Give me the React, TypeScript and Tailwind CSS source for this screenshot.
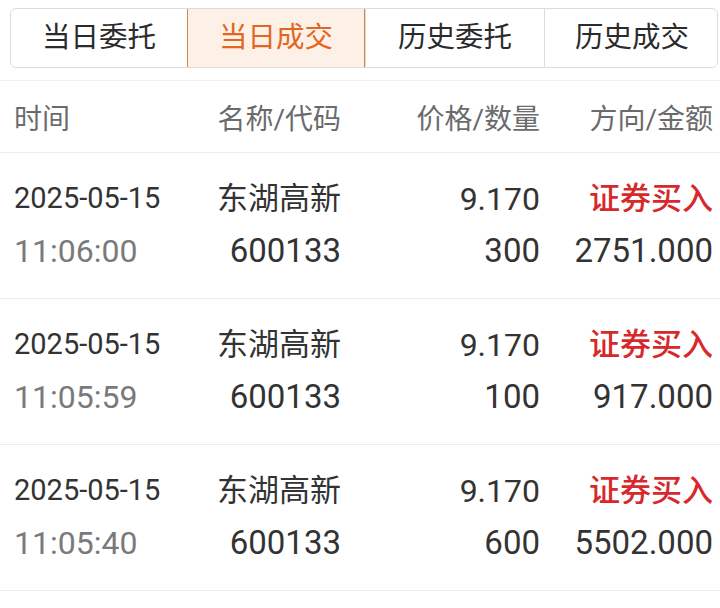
import { clsx } from "clsx";

const TABS = ["当日委托", "当日成交", "历史委托", "历史成交"];

const TRADES = [
  { date: "2025-05-15", time: "11:06:00", name: "东湖高新", code: "600133", price: "9.170", qty: "300", side: "证券买入", amount: "2751.000" },
  { date: "2025-05-15", time: "11:05:59", name: "东湖高新", code: "600133", price: "9.170", qty: "100", side: "证券买入", amount: "917.000" },
  { date: "2025-05-15", time: "11:05:40", name: "东湖高新", code: "600133", price: "9.170", qty: "600", side: "证券买入", amount: "5502.000" },
];

const cols = "grid grid-cols-[186px_141px_199px_173px] pl-[14px] pr-[7px]";

export default function App() {
  return (
    <div
      className="w-[720px] h-[608px] bg-white overflow-hidden"
      style={{ fontFamily: 'Roboto, "Noto Sans CJK SC", sans-serif' }}
    >
      <div className="pt-[8px] pl-[10px] pr-[2px]">
        <div className="grid grid-cols-[176px_178px_179px_175px] h-[60px] border border-[#dcdcdc] rounded-[6px] overflow-hidden">
          {TABS.map((t, i) => (
            <div
              key={t}
              className={clsx(
                "flex items-center justify-center text-[28.5px]",
                i === 1
                  ? "bg-[#fdf1e7] text-[#e2661f] border border-[#e0803f] -my-px"
                  : "text-[#2b2b2b]",
                i > 1 && "border-l border-[#dcdcdc]"
              )}
            >
              {t}
            </div>
          ))}
        </div>
      </div>

      <div className="mt-[12px] border-t border-[#efefef]" />
      <div className={clsx(cols, "h-[72px] items-center pt-[6px] text-[28px] text-[#6b6b6b] border-b border-[#ececec]")}>
        <span>时间</span>
        <span className="text-right">名称/代码</span>
        <span className="text-right">价格/数量</span>
        <span className="text-right">方向/金额</span>
      </div>

      {TRADES.map((r, i) => (
        <div key={i} className={clsx(cols, "h-[146px] pt-[22px] border-b border-[#ececec]")}>
          <div className="flex flex-col">
            <span className="h-[48px] flex items-center text-[29px] text-[#333]">{r.date}</span>
            <span className="h-[56px] flex items-center text-[32px] text-[#7a7a7a]">{r.time}</span>
          </div>
          <div className="flex flex-col items-end">
            <span className="h-[48px] flex items-center text-[31px] text-[#333]">{r.name}</span>
            <span className="h-[56px] flex items-center text-[33px] text-[#333]">{r.code}</span>
          </div>
          <div className="flex flex-col items-end">
            <span className="h-[48px] flex items-center text-[32px] text-[#333]">{r.price}</span>
            <span className="h-[56px] flex items-center text-[33px] text-[#333]">{r.qty}</span>
          </div>
          <div className="flex flex-col items-end">
            <span className="h-[48px] flex items-center text-[31px] font-medium text-[#d7282b]">{r.side}</span>
            <span className="h-[56px] flex items-center text-[33px] text-[#333]">{r.amount}</span>
          </div>
        </div>
      ))}
    </div>
  );
}
